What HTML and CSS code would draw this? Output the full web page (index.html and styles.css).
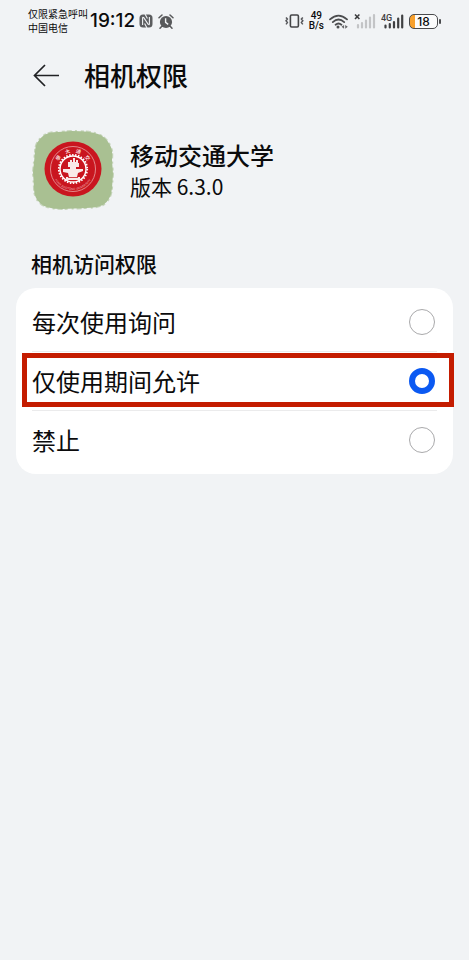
FILE: index.html
```html
<!DOCTYPE html>
<html lang="zh-CN">
<head>
    <meta charset="UTF-8">
    <meta name="viewport" content="width=device-width, initial-scale=1.0">
    <title>相机权限</title>
    <link rel="stylesheet" href="styles.css">
</head>
<body>
    <div class="status-bar">
        <div class="carrier">
            <span>仅限紧急呼叫</span>
            <span>中国电信</span>
        </div>
        <div class="time">19:12</div>
        <div class="status-left">
            <svg width="14" height="14" viewBox="0 0 14 14">
                <rect x="0.5" y="0.5" width="13" height="13" rx="3.5" fill="#5c5d5f"/>
                <path d="M3.6 11V4.2Q3.6 2.8 4.8 3.6L9.2 10.4Q10.4 11.2 10.4 9.8V3" fill="none" stroke="#f1f3f5" stroke-width="1.1"/>
                <path d="M6 0L8.4 4.4M5.6 9.6L8 14" stroke="#f1f3f5" stroke-width="1.1"/>
            </svg>
            <svg width="16" height="15" viewBox="0 0 16 15">
                <path d="M1 3.8L4 1M15 3.8L12 1M3.6 12.4L2 14.2M12.4 12.4L14 14.2" stroke="#58595b" stroke-width="1.5" stroke-linecap="round"/>
                <circle cx="8" cy="8" r="6.1" fill="#58595b"/>
                <path d="M7.6 4.3V8.4L10.2 10.4" fill="none" stroke="#f1f3f5" stroke-width="1.4"/>
            </svg>
        </div>
        <div class="status-right">
            <svg width="19" height="14" viewBox="0 0 19 14">
                <rect x="5.4" y="1" width="8" height="12" rx="1.2" fill="none" stroke="#454648" stroke-width="1.6"/>
                <path d="M1 3.4l1.4 1.7L1 6.8l1.4 1.8L1 10.4M17.8 3.4l-1.4 1.7 1.4 1.7-1.4 1.8 1.4 1.8" fill="none" stroke="#55565a" stroke-width="1.5"/>
            </svg>
            <div class="net-speed">
                <span>49</span>
                <span>B/s</span>
            </div>
            <svg width="20" height="15" viewBox="0 0 20 15">
                <path d="M1 5.4Q9.5-2.2 18 5.4M3.8 8.1Q9.5 3 15.2 8.1M6.6 10.7Q9.5 8.2 12.4 10.7" fill="none" stroke="#4c4d4f" stroke-width="1.8" stroke-linecap="round"/>
                <circle cx="9" cy="13" r="1.5" fill="#4c4d4f"/>
                <path d="M12.5 12.8l2.6-1.9v3.8zM18.8 12.8l-2.6-1.9v3.8z" fill="#66676a"/>
            </svg>
            <svg width="22" height="16" viewBox="0 0 22 16">
                <path d="M1 1.5L5.4 6M5.4 1.5L1 6" stroke="#3c3d3f" stroke-width="1.6"/>
                <path d="M4 12v2.5M8 10v4.5M12 7.5v7M16 4.5v10M20 2v12.5" stroke="#c3c4c6" stroke-width="2.2" stroke-linecap="round"/>
            </svg>
            <svg width="23" height="16" viewBox="0 0 23 16">
                <text class="net-type" x="0" y="8">4G</text>
                <path d="M4.5 12.5v2M8.8 11v3.5M13 9v5.5M17.2 5.5v9M21.2 2.5v12" stroke="#3f4042" stroke-width="2.2" stroke-linecap="round"/>
            </svg>
            <div class="battery"><span>18</span></div>
        </div>
    </div>

    <header class="title-bar">
        <a class="back" href="#" aria-label="返回">
            <svg width="27" height="24" viewBox="0 0 27 24">
                <path d="M26 12.5H2M12 2L1.5 12.5L12 23" fill="none" stroke="#202124" stroke-width="1.7"/>
            </svg>
        </a>
        <h1>相机权限</h1>
    </header>

    <main>
        <section class="app-info">
            <svg class="app-icon" width="82" height="80" viewBox="0 0 82 80">
                <path d="M3 22Q3 12 11 6Q16 2 26 2L40 1Q58 1 66 4Q74 7 78 15Q81 20 80 30L81 44L80 58Q79 70 71 75Q64 78 54 78L30 79Q14 79 8 73Q2 68 2 58L1 42Z" fill="#a9c092"/>
                <path d="M3 22Q3 12 11 6Q16 2 26 2L40 1Q58 1 66 4Q74 7 78 15Q81 20 80 30L81 44L80 58Q79 70 71 75Q64 78 54 78L30 79Q14 79 8 73Q2 68 2 58L1 42Z" fill="none" stroke="#a9c092" stroke-opacity="0.6" stroke-width="2" stroke-dasharray="3 2 5 3 2 4"/>
                <ellipse cx="41" cy="39" rx="28.5" ry="27.5" fill="#c9151f"/>
                <circle cx="41" cy="39" r="22.5" fill="none" stroke="#e9a5a6" stroke-width="0.8"/>
                <circle cx="41" cy="39" r="13" fill="none" stroke="#fff" stroke-width="1.4"/>
                <circle cx="41" cy="39" r="14.2" fill="none" stroke="#fff" stroke-width="1.8" stroke-dasharray="1.5 1.48"/>
                <path d="M36 32h2v-2h2v2h1v-4h2v4h1v-2h2v3h1v4h-3v2h7v2l-5 2-1 4h3v3H34v-3h3l-1-4-5-1v-3h7v-2h-2z" fill="#f9e9e8"/>
                <path d="M36 47.5h10" stroke="#c9151f" stroke-width="0.8"/>
                <path id="seal-top" d="M24.5 39A16.5 16.5 0 0 1 57.5 39" fill="none"/>
                <path id="seal-bottom" d="M20 39A21 21 0 0 0 62 39" fill="none"/>
                <text class="seal-name"><textPath href="#seal-top" startOffset="50%" text-anchor="middle">學　大　通　交</textPath></text>
                <text class="seal-latin"><textPath href="#seal-bottom" startOffset="50%" text-anchor="middle">XI'AN JIAOTONG UNIVERSITY</textPath></text>
            </svg>
            <div class="app-text">
                <h2>移动交通大学</h2>
                <p>版本 6.3.0</p>
            </div>
        </section>

        <h3 class="section-title" id="camera-access">相机访问权限</h3>
        <form class="options" role="radiogroup" aria-labelledby="camera-access">
            <label class="option">
                <span>每次使用询问</span>
                <input type="radio" name="camera" value="ask">
            </label>
            <label class="option highlight">
                <span>仅使用期间允许</span>
                <input type="radio" name="camera" value="while-using" checked>
            </label>
            <label class="option">
                <span>禁止</span>
                <input type="radio" name="camera" value="deny">
            </label>
        </form>
    </main>
</body>
</html>
```

FILE: styles.css
```css
* {
    box-sizing: border-box;
}
body {
    margin: 0;
    min-height: 100vh;
    background: #f1f3f5;
    color: #0b0b0c;
    font-family: "Noto Sans CJK SC", sans-serif;
}
h1, h2, h3, p {
    margin: 0;
    font-weight: 500;
}
svg {
    display: block;
    flex-shrink: 0;
}

/* status bar */
.status-bar {
    display: flex;
    align-items: center;
    height: 42px;
    padding: 0 31px 0 28px;
}
.carrier {
    display: flex;
    flex-direction: column;
    font-size: 10px;
    line-height: 14px;
    white-space: nowrap;
}
.time {
    margin-left: 2px;
    font-family: Inter, sans-serif;
    font-size: 19px;
    font-weight: 500;
    line-height: 20px;
}
.status-left {
    display: flex;
    align-items: center;
    gap: 5px;
    margin-left: 4px;
}
.status-right {
    display: flex;
    align-items: center;
    gap: 5px;
    margin-left: auto;
}
.net-speed {
    display: flex;
    flex-direction: column;
    align-items: center;
    font-family: Roboto, sans-serif;
    font-size: 10px;
    font-weight: 500;
    line-height: 10px;
}
.net-type {
    font-family: Roboto, sans-serif;
    font-size: 9px;
    font-weight: 500;
    fill: #3f4042;
}
.battery {
    position: relative;
    width: 29px;
    height: 15px;
    border: 1px solid #4a4b4d;
    border-radius: 5px;
    background: linear-gradient(to right, #f8a02c 5px, #fbfbfb 5px);
    font-family: Inter, sans-serif;
    font-size: 12px;
    font-weight: 500;
    line-height: 13px;
    text-align: center;
}
.battery::after {
    content: "";
    position: absolute;
    top: 4px;
    right: -4px;
    width: 2px;
    height: 5px;
    border-radius: 1px;
    background: #4a4b4d;
}

/* title */
.title-bar {
    display: flex;
    align-items: center;
    gap: 24px;
    height: 66px;
    padding: 0 33px;
}
.title-bar h1 {
    font-size: 26px;
    line-height: 36px;
}

/* app */
.app-info {
    display: flex;
    align-items: center;
    gap: 16px;
    padding: 22px 32px 0;
}
.app-text h2 {
    font-size: 24px;
    line-height: 32px;
}
.app-text p {
    font-size: 21px;
    font-weight: 400;
    line-height: 30px;
}
.seal-name {
    font-size: 5px;
    font-weight: 700;
    fill: #f6d5d5;
}
.seal-latin {
    font-family: "Liberation Sans", sans-serif;
    font-size: 3px;
    fill: #f0bcbc;
}

/* permission list */
.section-title {
    padding: 38px 31px 10px;
    font-size: 21px;
    line-height: 30px;
}
.options {
    margin: 0 16px;
    padding: 5px 16px;
    border-radius: 20px;
    background: #fff;
}
.option {
    position: relative;
    display: flex;
    align-items: center;
    justify-content: space-between;
    height: 59px;
    padding-right: 2px;
    border-bottom: 1px solid #ebebec;
    font-size: 24px;
    cursor: pointer;
}
.option span {
    padding-bottom: 2px;
}
.option:last-child {
    height: 58px;
    border-bottom: none;
}
.option input {
    -webkit-appearance: none;
    appearance: none;
    width: 26px;
    height: 26px;
    margin: 0;
    border: 1px solid #a9a9ab;
    border-radius: 50%;
    background: #fff;
    cursor: pointer;
}
.option input:checked {
    border: 6px solid #0b59f2;
}
.highlight::after {
    content: "";
    position: absolute;
    top: 1px;
    right: -17px;
    bottom: 3px;
    left: -10px;
    border: 5px solid #c41c00;
    pointer-events: none;
}
```
